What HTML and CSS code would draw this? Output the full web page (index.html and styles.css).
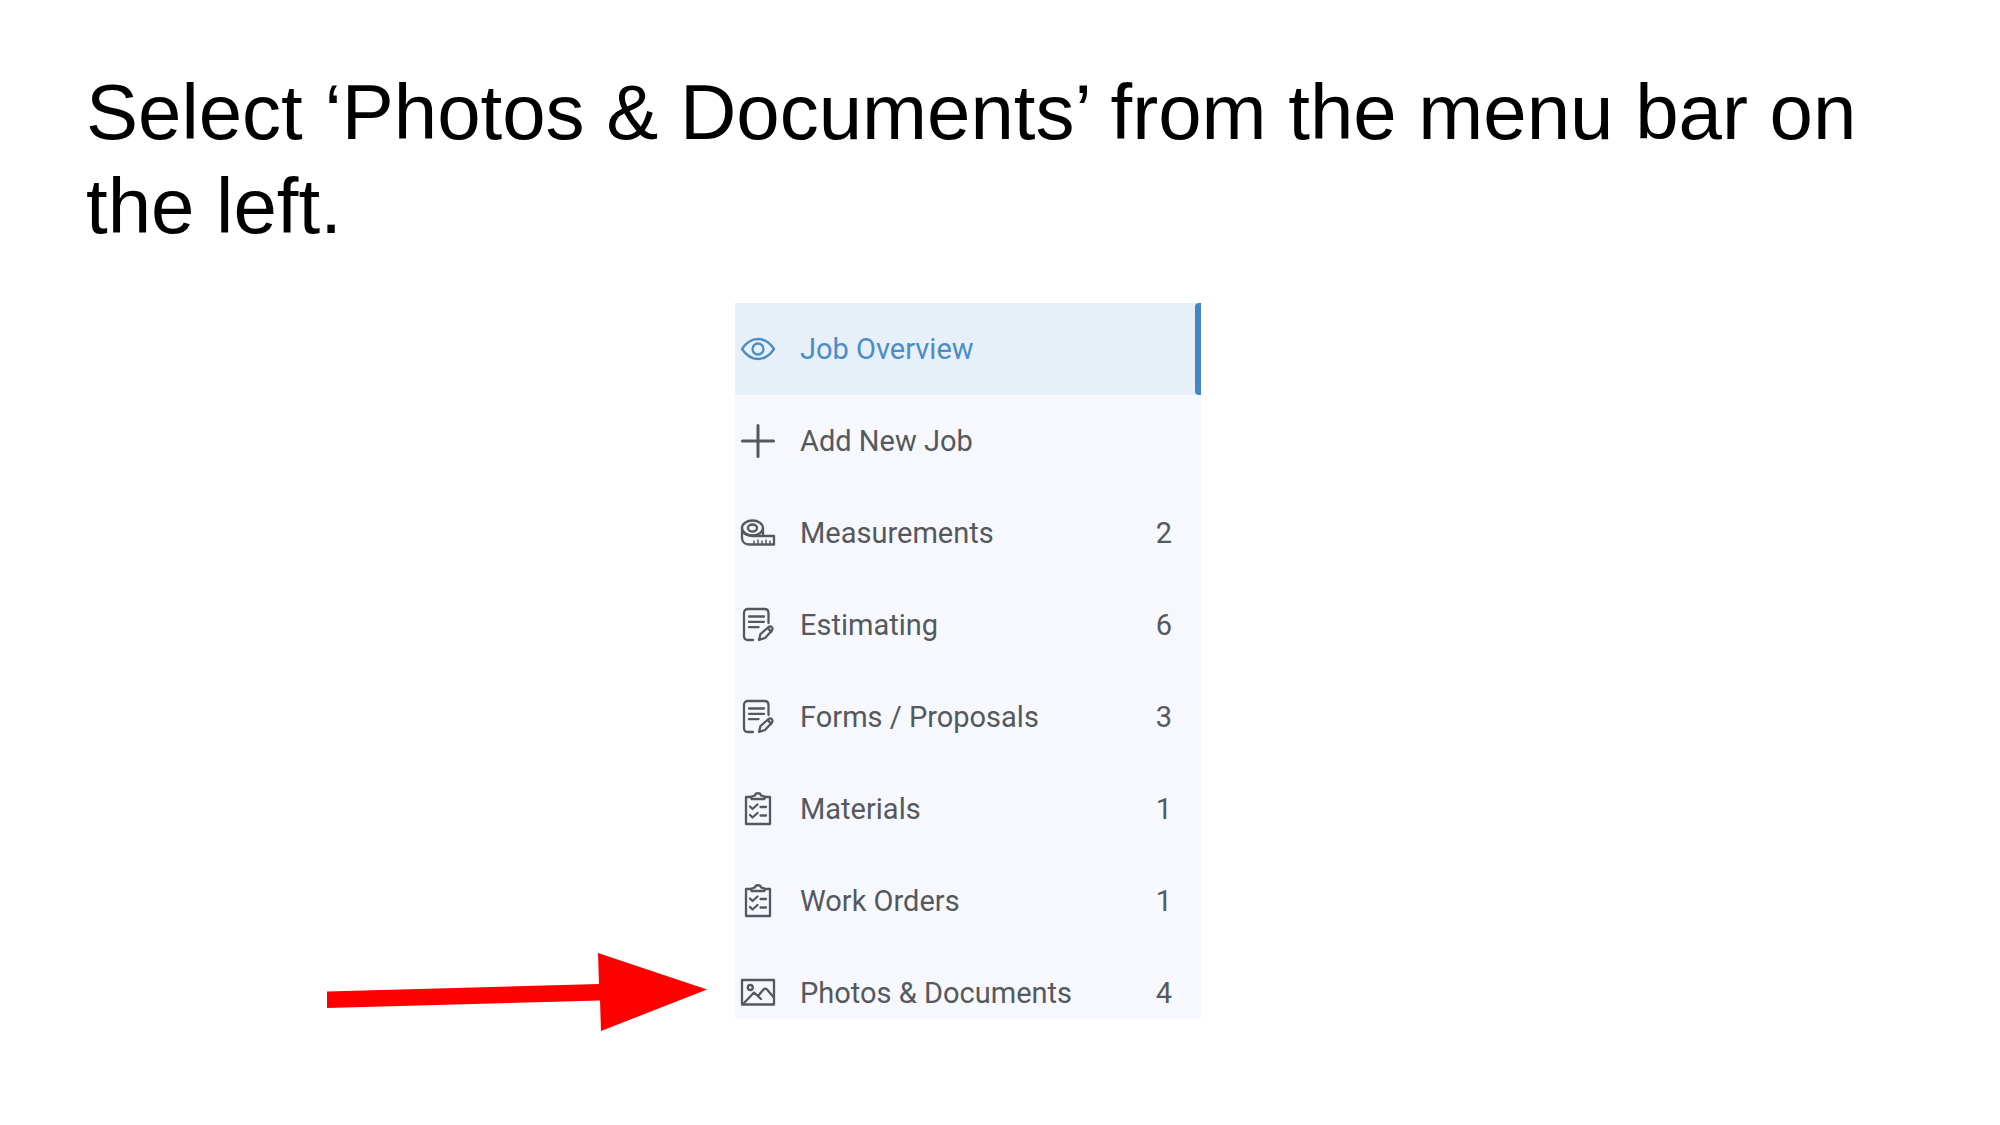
FILE: index.html
```html
<!DOCTYPE html>
<html lang="en">
<head>
<meta charset="utf-8">
<meta name="viewport" content="width=device-width, initial-scale=1">
<title>Photos &amp; Documents</title>
<link rel="stylesheet" href="styles.css">
</head>
<body>
<svg class="sprite" aria-hidden="true">
  <symbol id="eye" viewBox="0 0 36 36"><path d="M2 18C6 12 11 8 18 8s12 4 16 10c-4 6-9 10-16 10S6 24 2 18z"/><circle cx="18" cy="18" r="5.500"/></symbol>
  <symbol id="plus" viewBox="0 0 36 36"><path d="M18 2.500V33.500M2.500 18H33.500" stroke-width="3"/></symbol>
  <symbol id="tape" viewBox="0 0 36 36"><ellipse cx="12.500" cy="13" rx="10.500" ry="7.500"/><ellipse cx="12.500" cy="13" rx="4.500" ry="3.500"/><path d="M2 13v10c0 4 3 6.500 7 6.500h25V21H13c-5 0-9-2-10.500-5M23 13v7.500"/><path d="M14 29v-3M18 29v-4M22 29v-3M26 29v-4M30 29v-3" stroke-width="1.500"/></symbol>
  <symbol id="form" viewBox="0 0 36 36"><path d="M13 33H8c-2.500 0-4-1.500-4-4V6c0-2.500 1.500-4 4-4h16.500c2.500 0 4 1.500 4 4v10M9 9.500h15M9 14.800h15M9 20.200h9.500"/><path d="M19 33l1.500-6 8-7c2.500-1.500 5 .5 3.500 3.500l-7 7.500zM28 21l3 4"/></symbol>
  <symbol id="clipboard" viewBox="0 0 36 36"><path d="M11 6H6v27h24V6h-5"/><path d="M11.500 8V5.500L15 4.500c.5-3 5.500-3 6 0l3.500 1V8zM10 15.500l2.500 2.500 5-4.500M10 24l2.500 2.500 5-4.500M20.500 16H26M20.500 24.500H26"/></symbol>
  <symbol id="image" viewBox="0 0 36 36"><path d="M2 5h32v24.500H2z"/><circle cx="10.300" cy="12.500" r="2.500"/><path d="M4 28L14 17.500 21 24M18 21l5.500-6.500c1-1 2.500-1 3.500 0L33.500 22"/></symbol>
</svg>
<main class="slide">
  <h1 class="title">Select ‘Photos &amp; Documents’ from the menu bar on the left.</h1>
  <div class="stage">
    <svg class="arrow" viewBox="0 0 380 78" aria-hidden="true"><path d="M0 38.500L272 31 271 0 380 36.500 274 78 273 47.500 0 55z"/></svg>
    <nav class="menu" aria-label="Job menu">
      <a class="item active" href="#overview" aria-current="page"><svg class="icon"><use href="#eye"/></svg><span class="label">Job Overview</span></a>
      <a class="item" href="#new"><svg class="icon"><use href="#plus"/></svg><span class="label">Add New Job</span></a>
      <a class="item" href="#measurements"><svg class="icon"><use href="#tape"/></svg><span class="label">Measurements</span><span>2</span></a>
      <a class="item" href="#estimating"><svg class="icon"><use href="#form"/></svg><span class="label">Estimating</span><span>6</span></a>
      <a class="item" href="#forms"><svg class="icon"><use href="#form"/></svg><span class="label">Forms / Proposals</span><span>3</span></a>
      <a class="item" href="#materials"><svg class="icon"><use href="#clipboard"/></svg><span class="label">Materials</span><span>1</span></a>
      <a class="item" href="#orders"><svg class="icon"><use href="#clipboard"/></svg><span class="label">Work Orders</span><span>1</span></a>
      <a class="item" href="#photos"><svg class="icon"><use href="#image"/></svg><span class="label">Photos &amp; Documents</span><span>4</span></a>
    </nav>
  </div>
</main>
</body>
</html>
```
FILE: styles.css
```css
* {
  box-sizing: border-box;
}

body {
  margin: 0;
  background: #fff;
}

.sprite {
  display: none;
}

.slide {
  padding: 65px 0 40px;
}

.title {
  margin: 0 86px 50px;
  font: 400 78px/94px "Liberation Sans", Arial, sans-serif;
  color: #000;
}

.stage {
  display: grid;
  grid-template-columns: 92fr 466px 100fr;
  align-items: end;
}

.arrow {
  width: 380px;
  height: 78px;
  margin-right: 28px;
  justify-self: end;
  fill: #f00;
}

.menu {
  margin-bottom: 12px;
  background: #f6f8fd;
  font: 400 29px/36px Roboto, sans-serif;
}

.item {
  display: flex;
  align-items: center;
  gap: 24px;
  padding: 28px 29px 28px 5px;
  color: #55585d;
  text-decoration: none;
}

.item:last-child {
  padding-bottom: 8px;
}

.active {
  position: relative;
  background: #e7eff9;
  color: #4b8dc4;
}

/* Marker on the edge of the current entry */
.active::after {
  content: "";
  position: absolute;
  inset: 0 0 0 auto;
  width: 6px;
  border-radius: 4px 0 0 4px;
  background: #4487c3;
}

.label {
  flex: 1;
}

.icon {
  width: 36px;
  height: 36px;
  fill: none;
  stroke: currentColor;
  stroke-width: 2.3;
  stroke-linecap: round;
  stroke-linejoin: round;
}
```
